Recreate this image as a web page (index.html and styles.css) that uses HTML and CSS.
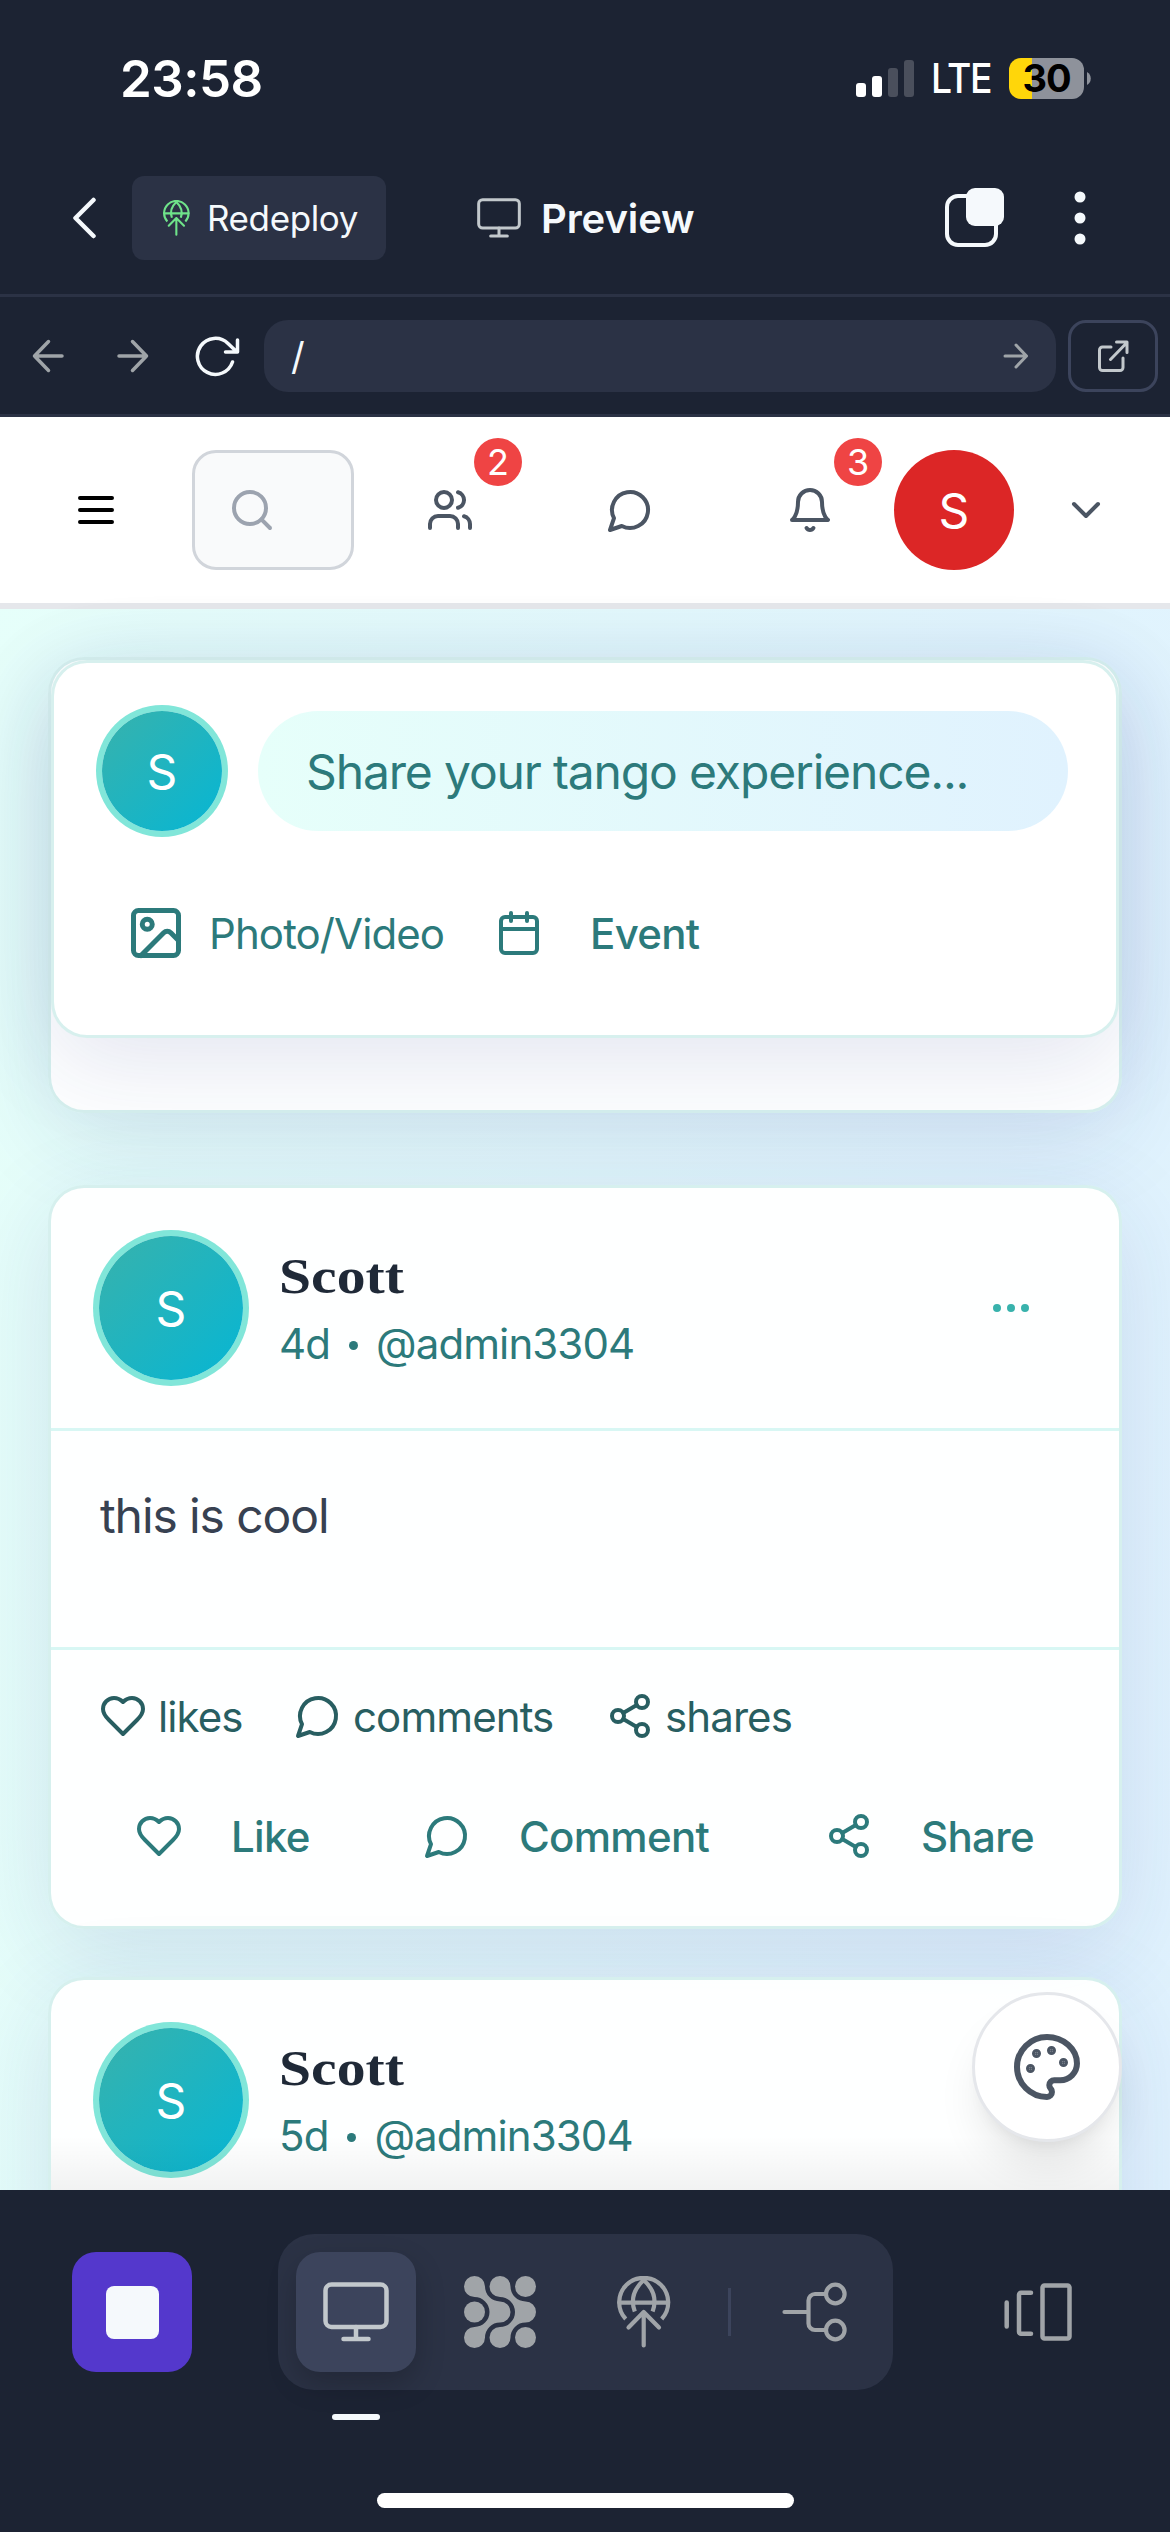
FILE: index.html
```html
<!DOCTYPE html>
<html lang="en">
<head>
<meta charset="utf-8">
<title>Preview</title>
<link rel="stylesheet" href="styles.css">
</head>
<body>
<svg class="sprite" aria-hidden="true">
  <symbol id="monitor" viewBox="0 0 66 60"><g fill="none" stroke="currentColor" stroke-width="4.5" stroke-linecap="round"><rect x="2.5" y="2.5" width="61" height="42.5" rx="6"/><path d="M33 45v12M20.500 57h25"/></g></symbol>
  <symbol id="deploy" viewBox="0 0 54 72"><g fill="none" stroke="currentColor" stroke-width="4.200" stroke-linecap="round" stroke-linejoin="round"><path d="M8.700 43A24.500 24.500 0 1 1 44.700 43" stroke-linecap="butt"/><path d="M2.500 26.700h48.500"/><path d="M26.700 4C17 13 13.500 24 17.800 35.500M26.700 4C36.400 13 39.900 24 35.600 35.500" stroke-linecap="butt"/><path d="M26.700 36v33.500M11.500 51.500L26.700 36 42 51.500"/></g></symbol>
  <symbol id="users" viewBox="0 0 24 24"><path d="M16 21v-2a4 4 0 0 0-4-4H6a4 4 0 0 0-4 4v2M22 21v-2a4 4 0 0 0-3-3.870M16 3.130a4 4 0 0 1 0 7.750"/><circle cx="9" cy="7" r="4"/></symbol>
  <symbol id="message" viewBox="0 0 24 24"><path d="M7.900 20A9 9 0 1 0 4 16.100L2 22Z"/></symbol>
  <symbol id="heart" viewBox="0 0 24 24"><path d="M19 14c1.490-1.460 3-3.210 3-5.500A5.500 5.500 0 0 0 16.500 3c-1.760 0-3 .5-4.500 2-1.500-1.500-2.740-2-4.500-2A5.500 5.500 0 0 0 2 8.500c0 2.300 1.500 4.050 3 5.500l7 7Z"/></symbol>
  <symbol id="share" viewBox="0 0 24 24"><circle cx="18" cy="5" r="3"/><circle cx="6" cy="12" r="3"/><circle cx="18" cy="19" r="3"/><path d="M8.590 13.510l6.830 3.980M15.410 6.510l-6.820 3.980"/></symbol>
</svg>

<div class="statusbar">
  <span class="clock">23:58</span>
  <div class="status-right">
    <svg class="signal" viewBox="0 0 58 37"><g fill="#fff"><rect y="23" width="10" height="14" rx="3"/><rect x="16" y="16" width="10" height="21" rx="3"/></g><g fill="#4a4f5c"><rect x="32" y="8" width="10" height="29" rx="3"/><rect x="48" width="10" height="37" rx="3"/></g></svg>
    <span class="network">LTE</span>
    <div class="battery"><span>30</span></div>
    <svg class="nub" viewBox="0 0 4 13"><path d="M0 0a7.500 7.500 0 0 1 0 13z" fill="#8e929b"/></svg>
  </div>
</div>

<div class="toolbar">
  <svg class="back" viewBox="0 0 24 42"><path d="M21.500 3L3.500 21l18 18" fill="none" stroke="#f5f9fc" stroke-width="4.500" stroke-linecap="round" stroke-linejoin="round"/></svg>
  <div class="redeploy"><svg class="deploy-small"><use href="#deploy"/></svg><span>Redeploy</span></div>
  <div class="tab-title"><svg class="monitor-small"><use href="#monitor"/></svg><span>Preview</span></div>
  <svg class="tabs" viewBox="0 0 60 60"><rect x="2" y="8" width="49" height="49" rx="11" fill="none" stroke="#f5f9fc" stroke-width="4"/><rect x="21" y="0" width="38" height="38" rx="9" fill="#f5f9fc"/></svg>
  <svg class="kebab" viewBox="0 0 12 54"><g fill="#f5f9fc"><circle cx="6" cy="6" r="5.500"/><circle cx="6" cy="27" r="5.500"/><circle cx="6" cy="48" r="5.500"/></g></svg>
</div>

<div class="addressbar">
  <svg class="nav-icon" viewBox="0 0 32 34"><path d="M30 17H2.500M16.500 2.500L2.500 17l14 14.500"/></svg>
  <svg class="nav-icon forward" viewBox="0 0 32 34"><path d="M2 17h27.500M15.500 2.500l14 14.500-14 14.500"/></svg>
  <svg class="reload" viewBox="0 0 48 44"><path d="M37.500 28A18 18 0 1 1 33 9.500L42 18M42.500 6v12H30.500"/></svg>
  <div class="url"><span>/</span><svg class="go" viewBox="0 0 26 26"><path d="M2 13h21.500M13 2l10.500 11L13 24"/></svg></div>
  <div class="external"><svg viewBox="0 0 32 32"><path d="M14 7H5.500A3 3 0 0 0 2.500 10v17.500a3 3 0 0 0 3 3h17.500a3 3 0 0 0 3-3V18M13.500 19.500L30 2.500M19.500 2h10.500v10.500"/></svg></div>
</div>

<div class="preview">
  <header class="site-header">
    <div class="hit"><svg class="ico menu" viewBox="0 0 24 24"><path d="M4 6h16M4 12h16M4 18h16"/></svg></div>
    <div class="search"><svg class="ico" viewBox="0 0 24 24"><circle cx="11" cy="11" r="8"/><path d="M21 21l-4.300-4.300"/></svg></div>
    <div class="hit friends"><svg class="ico"><use href="#users"/></svg><span class="badge">2</span></div>
    <div class="hit messages"><svg class="ico"><use href="#message"/></svg></div>
    <div class="hit alerts"><svg class="ico" viewBox="0 0 24 24"><path d="M6 8a6 6 0 0 1 12 0c0 7 3 9 3 9H3s3-2 3-9M10.300 21a1.940 1.940 0 0 0 3.400 0"/></svg><span class="badge">3</span></div>
    <div class="profile">S</div>
    <div class="hit chevron"><svg class="ico" viewBox="0 0 24 24"><path d="M6 9l6 6 6-6"/></svg></div>
  </header>

  <main class="feed">
    <section class="card composer-wrap">
      <div class="composer">
        <div class="composer-row">
          <div class="avatar small">S</div>
          <div class="prompt"><span>Share your tango experience...</span></div>
        </div>
        <div class="composer-actions">
          <svg class="ico photo" viewBox="0 0 24 24"><rect x="3" y="3" width="18" height="18" rx="2"/><circle cx="8.500" cy="8.500" r="2"/><path d="M21 15l-3.090-3.090a2 2 0 0 0-2.820 0L6 21"/></svg>
          <span class="photo-label">Photo/Video</span>
          <svg class="ico calendar" viewBox="0 0 24 24"><rect x="3" y="4" width="18" height="18" rx="2"/><path d="M16 2v4M8 2v4M3 10h18"/></svg>
          <span class="event-label">Event</span>
        </div>
      </div>
    </section>

    <article class="card post">
      <div class="post-head">
        <div class="avatar">S</div>
        <div class="who"><span class="name">Scott</span><div class="meta"><span>4d</span><i></i><span>@admin3304</span></div></div>
        <svg class="ico more" viewBox="0 0 24 24"><circle cx="5" cy="12" r="1"/><circle cx="12" cy="12" r="1"/><circle cx="19" cy="12" r="1"/></svg>
      </div>
      <div class="post-body">this is cool</div>
      <div class="stats">
        <div class="stat likes"><svg class="ico"><use href="#heart"/></svg><span>likes</span></div>
        <div class="stat comments"><svg class="ico"><use href="#message"/></svg><span>comments</span></div>
        <div class="stat shares"><svg class="ico"><use href="#share"/></svg><span>shares</span></div>
      </div>
      <div class="actions">
        <div class="action like"><svg class="ico"><use href="#heart"/></svg><span>Like</span></div>
        <div class="action comment"><svg class="ico"><use href="#message"/></svg><span>Comment</span></div>
        <div class="action share"><svg class="ico"><use href="#share"/></svg><span>Share</span></div>
      </div>
    </article>

    <article class="card post next">
      <div class="post-head">
        <div class="avatar">S</div>
        <div class="who"><span class="name">Scott</span><div class="meta"><span>5d</span><i></i><span>@admin3304</span></div></div>
      </div>
      <div class="post-body"></div>
    </article>
  </main>

  <div class="edge-shade"></div>
  <div class="fab"><svg class="ico" viewBox="0 0 24 24"><g fill="currentColor" stroke-width="2"><circle cx="13.500" cy="6.500" r=".5"/><circle cx="17.500" cy="10.500" r=".5"/><circle cx="8.500" cy="7.500" r=".5"/><circle cx="6.500" cy="12.500" r=".5"/></g><path d="M12 2C6.500 2 2 6.500 2 12s4.500 10 10 10c.926 0 1.648-.746 1.648-1.688 0-.437-.18-.835-.437-1.125-.29-.289-.438-.652-.438-1.125a1.640 1.640 0 0 1 1.668-1.668h1.996c3.051 0 5.555-2.503 5.555-5.554C21.965 6.012 17.461 2 12 2z"/></svg></div>
</div>

<div class="dock">
  <div class="dock-row">
    <div class="stop"><i></i></div>
    <div class="switcher">
      <div class="tool active"><svg class="monitor"><use href="#monitor"/></svg></div>
      <div class="tool"><svg class="agent" viewBox="0 0 72 72"><g fill="currentColor"><path id="chain" d="M10.500 0A10.500 10.500 0 0 1 21 10.500A15 15 0 0 0 36 25.500A10.500 10.500 0 0 1 36 46.500A15 15 0 0 0 21 61.500A10.500 10.500 0 1 1 10.500 51A15 15 0 0 0 10.500 21A10.500 10.500 0 0 1 10.500 0Z"/><use href="#chain" x="25.500"/><circle cx="10.500" cy="36" r="10.500"/><circle cx="61.500" cy="10.500" r="10.500"/><circle cx="61.500" cy="61.500" r="10.500"/></g></svg></div>
      <div class="tool"><svg class="deploy"><use href="#deploy"/></svg></div>
      <div class="rule"></div>
      <div class="tool branch"><svg viewBox="0 0 66 60"><g fill="none" stroke="currentColor" stroke-width="4.200" stroke-linecap="round"><circle cx="53.300" cy="12" r="9.300"/><circle cx="53.300" cy="48" r="9.300"/><path d="M2.500 30H26M44 12H33a6.500 6.500 0 0 0-6.500 6.500v23A6.500 6.500 0 0 0 33 48h11"/></g></svg></div>
    </div>
    <svg class="panes" viewBox="0 0 69 60"><g fill="none" stroke="#a0a4a8" stroke-width="4.500" stroke-linecap="round" stroke-linejoin="round"><path d="M2.700 20.500v24M27 10.700H17a2 2 0 0 0-2 2v37a2 2 0 0 0 2 2h10"/><rect x="38.500" y="3.500" width="27" height="53" rx="2"/></g></svg>
  </div>
  <div class="indicator"></div>
  <div class="home"></div>
</div>
</body>
</html>
```
FILE: styles.css
```css
* { box-sizing: border-box; }

body {
  margin: 0;
  width: 1170px;
  height: 2532px;
  overflow: hidden;
  display: flex;
  flex-direction: column;
  background: #1c2333;
  font-family: Inter, "Liberation Sans", sans-serif;
}

svg { display: block; flex: none; }
span { white-space: nowrap; }
.sprite { position: absolute; width: 0; height: 0; }

.ico {
  width: 48px;
  height: 48px;
  fill: none;
  stroke: currentColor;
  stroke-width: 2;
  stroke-linecap: round;
  stroke-linejoin: round;
}

/* Phone status bar */
.statusbar {
  height: 156px;
  padding: 0 79px 0 120px;
  display: flex;
  align-items: center;
  justify-content: space-between;
  color: #fff;
}
.clock { font-size: 51px; font-weight: 600; letter-spacing: -0.5px; }
.status-right { display: flex; align-items: center; }
.signal { width: 58px; height: 37px; }
.network { margin-left: 17px; width: 60px; font-size: 41px; font-weight: 500; letter-spacing: -1.6px; transform: scaleX(0.91); transform-origin: left; }
.battery {
  margin-left: 18px;
  width: 75px;
  height: 41px;
  border-radius: 12px;
  background: linear-gradient(90deg, #ffd60a 23px, #8e929b 23px);
  display: flex;
  align-items: center;
  justify-content: center;
  color: #000;
  font-size: 38px;
  font-weight: 700;
  letter-spacing: -1px;
}
.nub { width: 4px; height: 13px; margin-left: 3px; }

/* Workspace toolbar */
.toolbar {
  height: 141px;
  padding: 0 84px 14px 72px;
  display: flex;
  align-items: center;
  border-bottom: 3px solid #2b3245;
  color: #f5f9fc;
}
.back { width: 24px; height: 42px; }
.redeploy {
  margin-left: 36px;
  width: 254px;
  height: 84px;
  padding-left: 31px;
  border-radius: 12px;
  background: #2b3245;
  display: flex;
  align-items: center;
  font-size: 35px;
}
.redeploy span { margin-left: 17px; letter-spacing: -0.4px; }
.deploy-small { width: 27px; height: 36px; color: #6fe38a; }
.tab-title { margin-left: 91px; display: flex; align-items: center; font-size: 40px; font-weight: 600; }
.tab-title span { margin-left: 20px; letter-spacing: -0.1px; }
.monitor-small { width: 44px; height: 40px; color: #c2c8cc; }
.tabs { width: 60px; height: 60px; margin-left: auto; }
.kebab { width: 12px; height: 54px; margin-left: 69px; }

/* Address bar */
.addressbar {
  height: 120px;
  padding: 0 12px 0 32px;
  display: flex;
  align-items: center;
  border-bottom: 3px solid #2b3245;
}
.addressbar svg { fill: none; stroke: #9fa4a8; stroke-width: 3.5; stroke-linecap: round; stroke-linejoin: round; }
.nav-icon { width: 32px; height: 34px; }
.forward { margin-left: 53px; }
.addressbar .reload { width: 48px; height: 44px; margin-left: 46px; stroke: #f5f9fc; }
.url {
  margin-left: 21px;
  width: 792px;
  height: 72px;
  padding: 0 27px;
  border-radius: 24px;
  background: #2b3245;
  display: flex;
  align-items: center;
  justify-content: space-between;
  color: #f5f9fc;
  font-size: 38px;
}
.addressbar .go { width: 26px; height: 26px; stroke-width: 3; }
.external {
  margin-left: 12px;
  width: 90px;
  height: 72px;
  border: 3px solid #3c445c;
  border-radius: 18px;
  display: flex;
  align-items: center;
  justify-content: center;
}
.addressbar .external svg { width: 32px; height: 32px; stroke: #c2c8cc; stroke-width: 3; }

/* Previewed site */
.preview {
  position: relative;
  height: 1773px;
  overflow: hidden;
  background: linear-gradient(95deg, #e6fffa, #e0f2fe);
}
.site-header {
  height: 192px;
  padding: 0 24px 0 36px;
  display: flex;
  align-items: center;
  background: #fff;
  border-bottom: 6px solid #e5e7eb;
  color: #4b5563;
}
.hit { position: relative; width: 120px; height: 120px; display: flex; align-items: center; justify-content: center; flex: none; }
.menu { color: #000; }
.search {
  margin-left: 36px;
  width: 162px;
  height: 120px;
  padding-left: 33px;
  border: 3px solid #d1d5db;
  border-radius: 24px;
  background: #f9fafb;
  color: #9ca3af;
  display: flex;
  align-items: center;
}
.friends { margin-left: 36px; }
.messages, .alerts { margin-left: 60px; }
.badge {
  position: absolute;
  top: -12px;
  right: -12px;
  width: 48px;
  height: 48px;
  border-radius: 50%;
  background: #ef4444;
  color: #fff;
  font-size: 36px;
  line-height: 48px;
  text-align: center;
}
.profile {
  margin-left: 24px;
  width: 120px;
  height: 120px;
  border-radius: 50%;
  background: #dc2626;
  color: #fff;
  font-size: 48px;
  line-height: 122px;
  text-align: center;
}
.chevron { margin-left: 12px; }

/* Feed */
.feed { padding: 48px 48px 0; color: #2c7a7b; font-size: 42px; letter-spacing: -0.9px; }
.card {
  border: 3px solid rgba(56, 178, 172, 0.2);
  border-radius: 36px;
  background: rgba(255, 255, 255, 0.95);
  box-shadow: 0 24px 96px rgba(31, 38, 135, 0.12);
}
.composer-wrap { height: 456px; }
.composer {
  height: 378px;
  border: 3px solid rgba(56, 178, 172, 0.2);
  border-radius: 36px;
  background: #fff;
  box-shadow: 0 24px 96px rgba(31, 38, 135, 0.12);
  padding: 48px 48px 0;
}
.composer-row { display: flex; gap: 36px; }
.avatar {
  width: 144px;
  height: 144px;
  border-radius: 50%;
  background: linear-gradient(135deg, #38b2ac, #06b6d4);
  box-shadow: 0 0 0 6px #81e6d9;
  color: #fff;
  font-size: 48px;
  line-height: 146px;
  text-align: center;
  letter-spacing: 0;
  flex: none;
}
.avatar.small { width: 120px; height: 120px; line-height: 122px; }
.prompt {
  width: 810px;
  height: 120px;
  padding-left: 48px;
  border-radius: 60px;
  background: linear-gradient(90deg, #e6fffa, #e0f2fe);
  font-size: 48px;
  line-height: 122px;
  letter-spacing: -1.15px;
}
.composer-actions { display: flex; align-items: center; margin-top: 72px; height: 60px; padding-left: 24px; }
.photo { width: 60px; height: 60px; }
.photo-label { width: 309px; padding-left: 23px; }
.event-label { padding-left: 47px; font-weight: 550; letter-spacing: -0.7px; }

.post { height: 744px; margin-top: 72px; }
.post.next { margin-top: 48px; }
.post-head {
  height: 243px;
  padding: 0 84px 0 48px;
  display: flex;
  align-items: center;
  border-bottom: 3px solid rgba(129, 230, 217, 0.3);
}
.who { margin: 8px 0 0 36px; display: flex; flex-direction: column; }
.name {
  height: 64px;
  font-family: "Liberation Serif", serif;
  font-size: 51px;
  font-weight: 700;
  line-height: 60px;
  letter-spacing: 0;
  color: #1f2937;
  transform: scaleX(1.13);
  transform-origin: left;
}
.meta { display: flex; align-items: center; line-height: 68px; letter-spacing: -0.9px; }
.meta i { width: 9px; height: 9px; margin: 3px 18px 0 19px; border-radius: 50%; background: currentColor; }
.more { margin-left: auto; color: #38b2ac; }
.post-body {
  height: 219px;
  padding: 49px 49px 0;
  font-size: 48px;
  line-height: 72px;
  letter-spacing: -1.1px;
  color: #374151;
  border-bottom: 3px solid rgba(129, 230, 217, 0.3);
}
.stats { display: flex; margin: 42px 0 0 48px; color: #285e61; }
.stat, .action { display: flex; align-items: center; height: 48px; }
.stat span { margin-left: 11px; }
.likes { width: 195px; }
.comments { width: 312px; }
.actions { display: flex; margin-top: 72px; padding-left: 84px; font-weight: 550; letter-spacing: -0.7px; }
.action span { margin-left: 48px; }
.like { width: 288px; }
.comment { width: 402px; }

.edge-shade {
  position: absolute;
  left: 51px;
  right: 51px;
  bottom: 0;
  height: 54px;
  background: linear-gradient(rgba(0, 0, 0, 0), rgba(0, 0, 0, 0.05));
}
.fab {
  position: absolute;
  right: 48px;
  bottom: 48px;
  width: 150px;
  height: 150px;
  border: 3px solid #e5e7eb;
  border-radius: 50%;
  background: #fff;
  box-shadow: 0 30px 45px -9px rgba(0, 0, 0, 0.1), 0 12px 18px -12px rgba(0, 0, 0, 0.1);
  display: flex;
  align-items: center;
  justify-content: center;
  color: #4b5563;
}
.fab .ico { width: 72px; height: 72px; }

/* Bottom dock */
.dock { height: 342px; padding-top: 44px; display: flex; flex-direction: column; }
.dock-row { display: flex; align-items: center; height: 156px; padding: 0 97px 0 72px; }
.stop {
  width: 120px;
  height: 120px;
  border-radius: 24px;
  background: #5438cc;
  display: flex;
  align-items: center;
  justify-content: center;
}
.stop i { width: 53px; height: 53px; border-radius: 8px; background: #f5f9fc; }
.switcher {
  margin-left: 86px;
  width: 615px;
  height: 156px;
  padding: 0 18px;
  border-radius: 36px;
  background: #2b3245;
  display: flex;
  align-items: center;
  gap: 24px;
  color: #a0a4a8;
}
.tool { width: 120px; height: 120px; border-radius: 24px; display: flex; align-items: center; justify-content: center; flex: none; }
.tool.active { background: #3c445c; color: #c2c8cc; box-shadow: 0 12px 30px rgba(0, 0, 0, 0.2); }
.monitor { width: 66px; height: 60px; }
.agent { width: 72px; height: 72px; }
.deploy { width: 54px; height: 72px; }
.rule { width: 3px; height: 48px; background: #3c445c; }
.branch svg { width: 66px; height: 60px; }
.panes { width: 69px; height: 60px; margin-left: auto; }
.indicator { margin: 24px 0 0 332px; width: 48px; height: 6px; border-radius: 3px; background: #f5f9fc; }
.home { margin: 73px auto 0; width: 417px; height: 15px; border-radius: 8px; background: #fff; }
```
